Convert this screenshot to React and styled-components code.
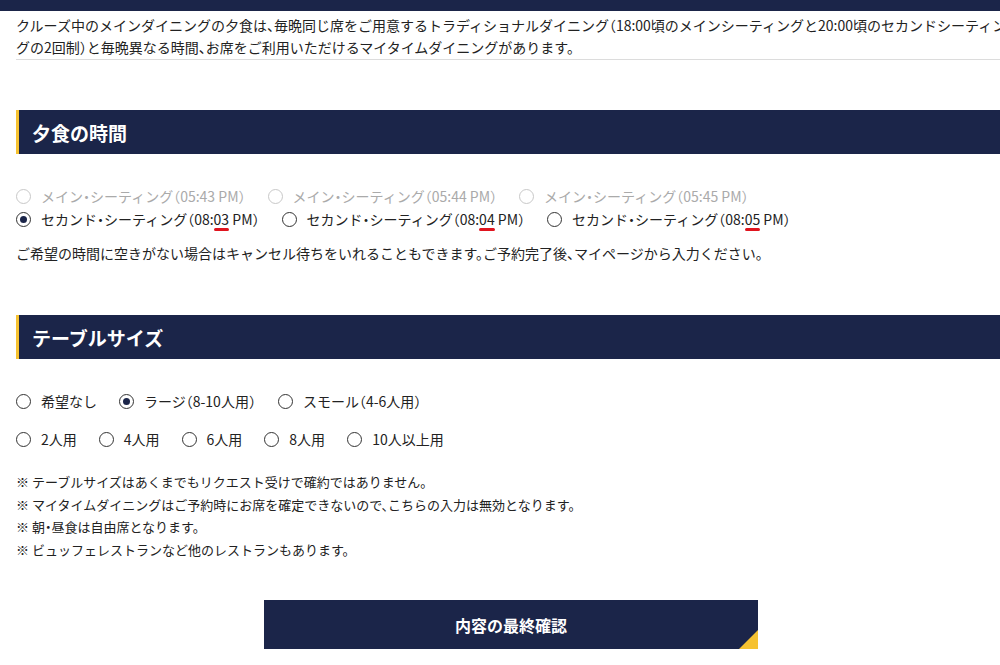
import React from "react";
import styled, { createGlobalStyle } from "styled-components";

const GlobalStyle = createGlobalStyle`
  html, body {
    margin: 0;
    padding: 0;
    background: #fff;
    overflow: hidden;
  }
  body {
    font-family: "Noto Sans CJK JP", "Noto Sans", sans-serif;
    font-feature-settings: "halt";
    color: #222;
  }
`;

const navy = "#1b2549";
const yellow = "#f6c231";

const Page = styled.div`
  width: 1030px;
`;

const TopBar = styled.div`
  height: 11px;
  background: ${navy};
`;

const Content = styled.div`
  width: 990px;
  margin-left: 16px;
  display: flex;
  flex-direction: column;
`;

const Intro = styled.p`
  margin: 3px -7px 0 0;
  font-size: 14px;
  line-height: 22px;
  padding-bottom: 1px;
  border-bottom: 1px solid #dcdcdc;
`;

const SectionTitle = styled.h2`
  margin: ${(p) => p.$top}px 0 0;
  height: 44px;
  display: flex;
  align-items: center;
  padding-left: 13px;
  background: ${navy};
  border-left: 3px solid ${yellow};
  color: #fff;
  font-size: 19px;
  font-weight: 700;
`;

const RadioGroup = styled.div`
  display: flex;
  flex-direction: column;
  gap: ${(p) => p.$gap}px;
  margin-top: ${(p) => p.$top}px;
`;

const RadioRow = styled.div`
  display: flex;
  align-items: center;
  gap: ${(p) => p.$gap || 22}px;
`;

const RadioLabel = styled.label`
  display: flex;
  align-items: center;
  gap: 10px;
  font-size: 14px;
  line-height: 20px;
  color: ${(p) => (p.$disabled ? "#aaa" : "#222")};
  white-space: nowrap;
`;

const Circle = styled.span`
  box-sizing: border-box;
  width: 15px;
  height: 15px;
  border-radius: 50%;
  border: 1px solid ${(p) => (p.$disabled ? "#c8c8c8" : "#333")};
  display: flex;
  align-items: center;
  justify-content: center;
  flex-shrink: 0;

  &::after {
    content: "";
    width: 7px;
    height: 7px;
    border-radius: 50%;
    background: ${navy};
    display: ${(p) => (p.$checked ? "block" : "none")};
  }
`;

const Mark = styled.span`
  position: relative;

  &::after {
    content: "";
    position: absolute;
    left: 0;
    right: 0;
    bottom: -2px;
    height: 3px;
    border-radius: 2px;
    background: #e0141e;
  }
`;

const Note = styled.p`
  margin: ${(p) => p.$top}px 0 0;
  font-size: 14px;
  line-height: 22px;
`;

const NoteList = styled.ul`
  list-style: none;
  margin: 22px 0 0;
  padding: 0;
  font-size: 13px;
  line-height: 22.5px;
`;

const ButtonRow = styled.div`
  display: flex;
  justify-content: center;
  margin-top: 39px;
`;

const ConfirmButton = styled.button`
  position: relative;
  width: 494px;
  height: 49px;
  border: 0;
  background: ${navy};
  color: #fff;
  font-family: inherit;
  font-feature-settings: inherit;
  font-size: 16px;
  font-weight: 700;
  cursor: pointer;
  overflow: hidden;

  &::after {
    content: "";
    position: absolute;
    right: 0;
    bottom: 0;
    border-style: solid;
    border-width: 0 0 19px 19px;
    border-color: transparent transparent ${yellow} transparent;
  }
`;

const Radio = ({ checked, disabled, children }) => (
  <RadioLabel $disabled={disabled}>
    <Circle $checked={checked} $disabled={disabled} />
    <span>{children}</span>
  </RadioLabel>
);

const mainSeatings = ["05:43", "05:44", "05:45"];
const secondSeatings = ["03", "04", "05"];
const tableSizes = ["2人用", "4人用", "6人用", "8人用", "10人以上用"];
const notes = [
  "※ テーブルサイズはあくまでもリクエスト受けで確約ではありません。",
  "※ マイタイムダイニングはご予約時にお席を確定できないので、こちらの入力は無効となります。",
  "※ 朝・昼食は自由席となります。",
  "※ ビュッフェレストランなど他のレストランもあります。",
];

export default function App() {
  return (
    <Page>
      <GlobalStyle />
      <TopBar />
      <Content>
        <Intro>
          クルーズ中のメインダイニングの夕食は、毎晩同じ席をご用意するトラディショナルダイニング（18:00頃のメインシーティングと20:00頃のセカンドシーティングの2回制）と毎晩異なる時間、お席をご利用いただけるマイタイムダイニングがあります。
        </Intro>

        <SectionTitle $top={50}>夕食の時間</SectionTitle>
        <RadioGroup $gap={3} $top={32}>
          <RadioRow>
            {mainSeatings.map((t) => (
              <Radio key={t} disabled>
                メイン・シーティング（{t} PM）
              </Radio>
            ))}
          </RadioRow>
          <RadioRow>
            {secondSeatings.map((m, i) => (
              <Radio key={m} checked={i === 0}>
                セカンド・シーティング（08:<Mark>{m}</Mark> PM）
              </Radio>
            ))}
          </RadioRow>
        </RadioGroup>
        <Note $top={13}>
          ご希望の時間に空きがない場合はキャンセル待ちをいれることもできます。ご予約完了後、マイページから入力ください。
        </Note>

        <SectionTitle $top={51}>テーブルサイズ</SectionTitle>
        <RadioGroup $gap={18} $top={32}>
          <RadioRow $gap={22}>
            <Radio>希望なし</Radio>
            <Radio checked>ラージ（8-10人用）</Radio>
            <Radio>スモール（4-6人用）</Radio>
          </RadioRow>
          <RadioRow $gap={22}>
            {tableSizes.map((s) => (
              <Radio key={s}>{s}</Radio>
            ))}
          </RadioRow>
        </RadioGroup>

        <NoteList>
          {notes.map((n) => (
            <li key={n}>{n}</li>
          ))}
        </NoteList>

        <ButtonRow>
          <ConfirmButton>内容の最終確認</ConfirmButton>
        </ButtonRow>
      </Content>
    </Page>
  );
}
